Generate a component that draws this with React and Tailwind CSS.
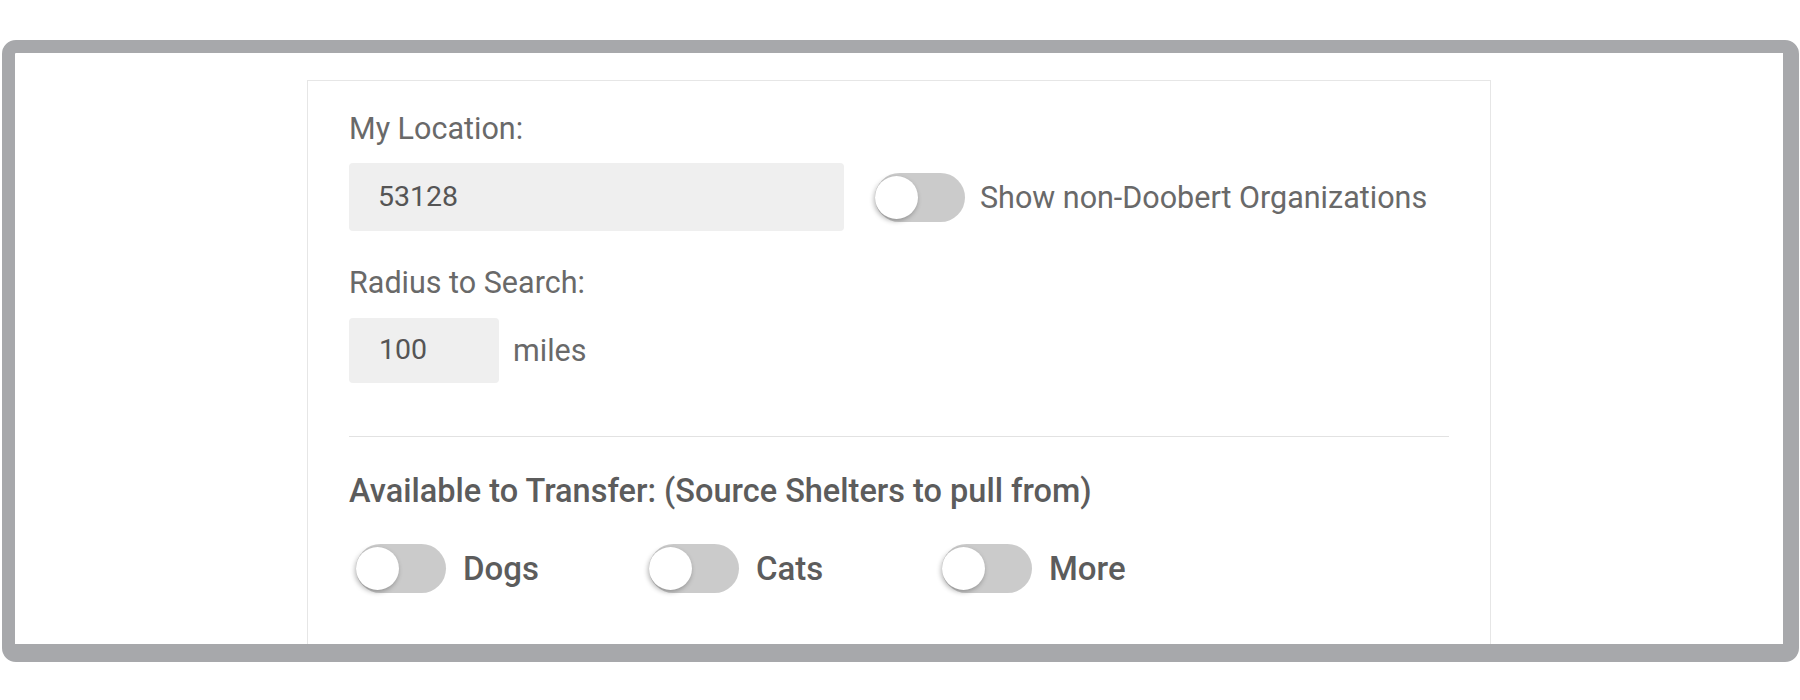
import React from "react";

const FONT = { fontFamily: "Roboto, 'Liberation Sans', sans-serif" };

function Toggle({ className = "" }) {
  return (
    <span className={`relative inline-block w-[90px] h-[49px] rounded-full bg-[#cbcbcb] shrink-0 ${className}`}>
      <span className="absolute left-0 top-[3px] w-[43px] h-[43px] rounded-full bg-white shadow-[-1px_2px_5px_rgba(0,0,0,0.3)]" />
    </span>
  );
}

const ANIMALS = ["Dogs", "Cats", "More"];

export default function App() {
  return (
    <div className="min-h-[700px] bg-white pt-[40px] pl-[2px]" style={FONT}>
      <div className="w-[1797px] h-[622px] border-solid border-t-[13px] border-l-[13px] border-r-[16px] border-b-[18px] border-[#a7a8ab] rounded-[14px] overflow-hidden bg-white">
        <div className="flex justify-center pt-[27px]">
          <div className="w-[1184px] border border-[#e6e6e6] px-[41px] pt-[30px] pb-[80px]">
            {/* Location */}
            <div className="text-[30.5px] leading-[35px] text-[#696969]">My Location:</div>
            <div className="mt-[17px] flex items-center">
              <div className="w-[495px] h-[68px] rounded-[4px] bg-[#efefef] pl-[29px] flex items-center text-[28.5px] text-[#555]">
                53128
              </div>
              <Toggle className="ml-[31px]" />
              <span className="ml-[15px] text-[30.5px] leading-[35px] text-[#696969]">Show non-Doobert Organizations</span>
            </div>

            {/* Radius */}
            <div className="mt-[34px] text-[30.5px] leading-[35px] text-[#696969]">Radius to Search:</div>
            <div className="mt-[18px] flex items-center">
              <div className="w-[150px] h-[65px] rounded-[4px] bg-[#efefef] pl-[30px] flex items-center text-[28.5px] text-[#555]">
                100
              </div>
              <span className="ml-[14px] text-[30.5px] leading-[35px] text-[#696969]">miles</span>
            </div>

            <div className="mt-[53px] border-t border-[#e2e2e2]" />

            {/* Transfer */}
            <div className="mt-[37px] text-[32.5px] leading-[35px] font-medium text-[#5c5c5c]">
              Available to Transfer: (Source Shelters to pull from)
            </div>
            <div className="mt-[35px] flex items-center pl-[7px]">
              {ANIMALS.map((a) => (
                <div key={a} className="w-[293px] flex items-center">
                  <Toggle />
                  <span className="ml-[17px] text-[33px] leading-[35px] font-medium text-[#5c5c5c]">{a}</span>
                </div>
              ))}
            </div>
          </div>
        </div>
      </div>
    </div>
  );
}
